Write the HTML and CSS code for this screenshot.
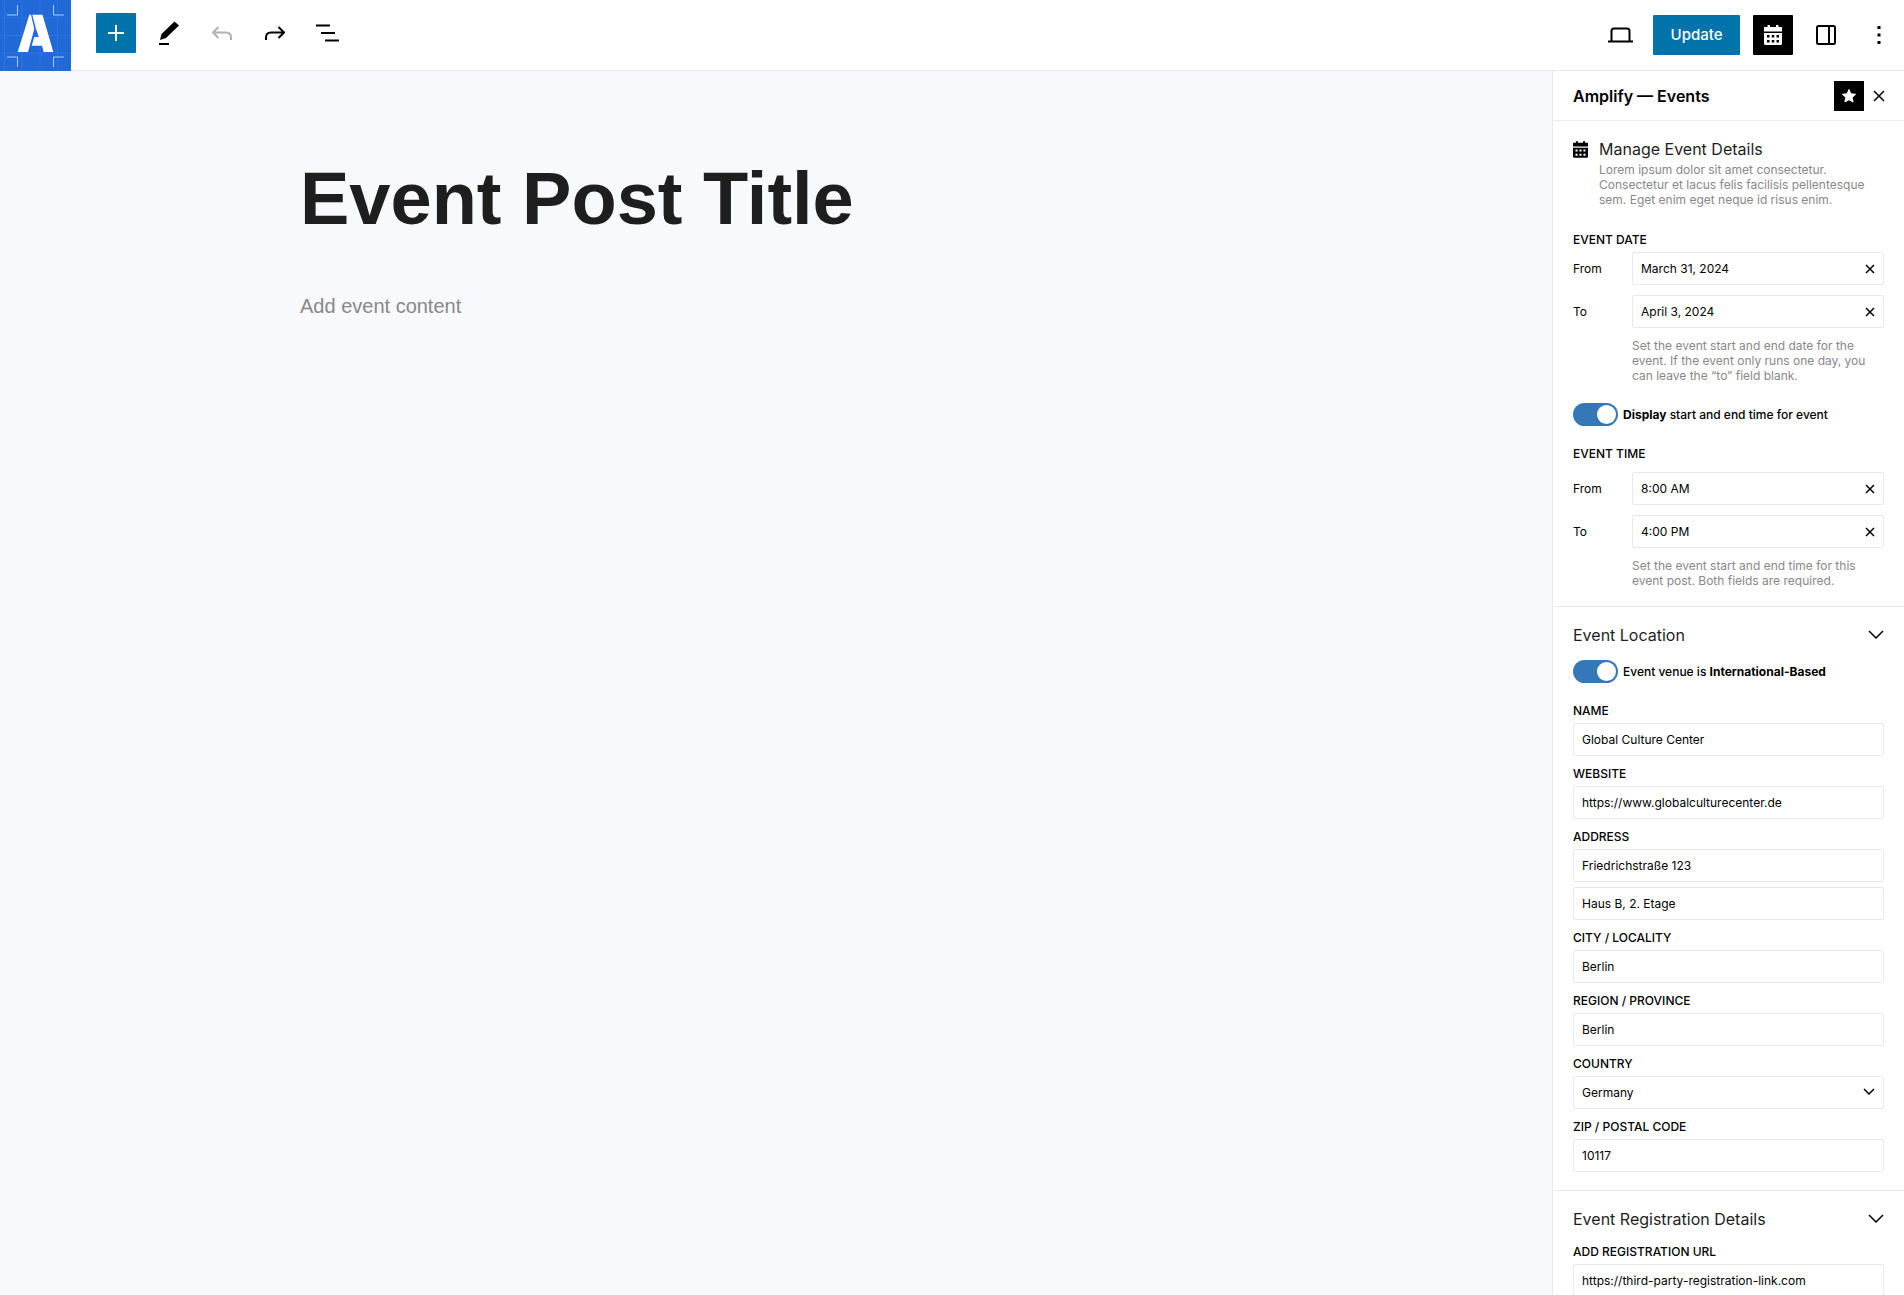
FILE: index.html
```html
<!doctype html>
<html lang="en">
<head>
<meta charset="utf-8">
<meta name="viewport" content="width=device-width, initial-scale=1">
<title>Event Post Title</title>
<link rel="stylesheet" href="styles.css">
</head>
<body>

<header class="topbar">
  <a class="logo" href="#" aria-label="Amplify">
    <svg width="71" height="71" viewBox="0 0 71 71">
      <rect width="71" height="71" fill="#2269d8"/>
      <path d="M4.500 0v71M22 0v71M40 0v71M57.500 0v71M0 18h71M0 35.500h71M0 53h71" stroke="#2d75e0" fill="none"/>
      <path d="M17.500 5v10H7M53.500 5v10H64M17.500 67V57H7M53.500 67V57H64" stroke="#a9ccf8" fill="none"/>
      <path d="M29.300 14.700h1.700L34.300 29l-6.300 23H17.700z" fill="#fff"/>
      <path d="M32.300 14.700h10.200L53.300 52H43.700L42 45.700H31.700L34.200 37h4.600L36 29z" fill="#fff"/>
    </svg>
  </a>
  <div class="tools">
    <button class="icon-btn blue" aria-label="Add block">
      <svg width="16" height="16" viewBox="0 0 16 16"><path d="M8 0v16M0 8h16" stroke="#fff" stroke-width="2"/></svg>
    </button>
    <button class="icon-btn" aria-label="Edit">
      <svg width="22" height="24" viewBox="0 0 22 24"><path d="M2 19l1.500-6L16.500 .500 21 4.500 8 17z"/><path d="M1 23h10" stroke="#000" stroke-width="2"/></svg>
    </button>
    <button class="icon-btn" aria-label="Undo" disabled>
      <svg class="line" width="20" height="14" viewBox="0 0 20 14"><path d="M6.500 1L1 6.500 6.500 12M1 6.500h13q5 0 5 5V14"/></svg>
    </button>
    <button class="icon-btn" aria-label="Redo">
      <svg class="line" width="20" height="14" viewBox="0 0 20 14"><path d="M13.500 1L19 6.500 13.500 12M19 6.500H6q-5 0-5 5V14"/></svg>
    </button>
    <button class="icon-btn" aria-label="Document overview">
      <svg class="line" width="24" height="18" viewBox="0 0 24 18"><path d="M0 1.500h14M5 9h14M9 16.500h14"/></svg>
    </button>
  </div>
  <div class="actions">
    <button class="icon-btn" aria-label="Preview">
      <svg class="line" width="25" height="16" viewBox="0 0 25 16"><path d="M3.500 14V4q0-2.500 2.500-2.500h13Q21.500 1.500 21.500 4v10M0 14.500h25"/></svg>
    </button>
    <button class="update">Update</button>
    <button class="icon-btn black" aria-label="Events">
      <svg width="18" height="20" viewBox="0 0 18 20"><use href="#calendar"/></svg>
    </button>
    <button class="icon-btn" aria-label="Settings">
      <svg class="line" width="20" height="20" viewBox="0 0 20 20"><rect x="1" y="1" width="18" height="18" rx="1.500"/><path d="M13 1v18"/></svg>
    </button>
    <button class="icon-btn" aria-label="Options">
      <svg width="4" height="18" viewBox="0 0 4 18"><path d="M.500 0h3v3h-3zM.500 7.500h3v3h-3zM.500 15h3v3h-3z"/></svg>
    </button>
  </div>
</header>

<div class="workspace">
  <main class="editor">
    <h1>Event Post Title</h1>
    <p>Add event content</p>
  </main>

  <aside class="sidebar">
    <div class="sidebar-head">
      <h2>Amplify — Events</h2>
      <button class="pin" aria-label="Pin sidebar">
        <svg width="14" height="14" viewBox="0 0 14 14"><path d="M7 .500l1.900 4.300 4.700.500-3.500 3.100 1 4.600L7 10.700 2.900 13l1-4.600L.400 5.300l4.700-.500z" fill="#fff" stroke="#fff" stroke-linejoin="round"/></svg>
      </button>
      <button class="close" aria-label="Close sidebar">
        <svg width="12" height="12" viewBox="0 0 12 12"><path d="M1 1l10 10M11 1L1 11"/></svg>
      </button>
    </div>

    <section>
      <div class="intro">
        <svg width="15" height="17" viewBox="0 0 18 20">
          <g id="calendar">
            <path d="M3.500 0h2.500v2h6V0h2.500v2H18v4.500H0V2h3.500z"/>
            <path fill-rule="evenodd" d="M0 8h18v10.500q0 1.500-1.500 1.500h-15Q0 20 0 18.500zM3 10v2.500h2.500V10zM7.750 10v2.500h2.500V10zM12.500 10v2.500H15V10zM3 15v2.500h2.500V15zM7.750 15v2.500h2.500V15zM12.500 15v2.500H15V15z"/>
          </g>
        </svg>
        <div>
          <h3>Manage Event Details</h3>
          <p class="help">Lorem ipsum dolor sit amet consectetur. Consectetur et lacus felis facilisis pellentesque sem. Eget enim eget neque id risus enim.</p>
        </div>
      </div>

      <h4>Event Date</h4>
      <div class="range">
        <label for="date-from">From</label>
        <div class="clearable">
          <input id="date-from" type="text" value="March 31, 2024">
          <button aria-label="Clear start date"><svg width="10" height="10" viewBox="0 0 10 10"><path d="M1 1l8 8M9 1L1 9"/></svg></button>
        </div>
        <label for="date-to">To</label>
        <div class="clearable">
          <input id="date-to" type="text" value="April 3, 2024">
          <button aria-label="Clear end date"><svg width="10" height="10" viewBox="0 0 10 10"><path d="M1 1l8 8M9 1L1 9"/></svg></button>
        </div>
        <p class="help">Set the event start and end date for the event. If the event only runs one day, you can leave the “to” field blank.</p>
      </div>

      <label class="toggle"><input type="checkbox" checked><span><b>Display</b> start and end time for event</span></label>

      <h4>Event Time</h4>
      <div class="range time">
        <label for="time-from">From</label>
        <div class="clearable">
          <input id="time-from" type="text" value="8:00 AM">
          <button aria-label="Clear start time"><svg width="10" height="10" viewBox="0 0 10 10"><path d="M1 1l8 8M9 1L1 9"/></svg></button>
        </div>
        <label for="time-to">To</label>
        <div class="clearable">
          <input id="time-to" type="text" value="4:00 PM">
          <button aria-label="Clear end time"><svg width="10" height="10" viewBox="0 0 10 10"><path d="M1 1l8 8M9 1L1 9"/></svg></button>
        </div>
        <p class="help">Set the event start and end time for this event post. Both fields are required.</p>
      </div>
    </section>

    <section>
      <button class="section-title">Event Location
        <svg width="16" height="10" viewBox="0 0 16 10"><path d="M1 1l7 7 7-7"/></svg>
      </button>
      <label class="toggle"><input type="checkbox" checked><span>Event venue is <b>International-Based</b></span></label>
      <div class="fields">
        <div class="field">
          <label for="name">Name</label>
          <input id="name" type="text" value="Global Culture Center">
        </div>
        <div class="field">
          <label for="website">Website</label>
          <input id="website" type="text" value="https://www.globalculturecenter.de">
        </div>
        <div class="field">
          <label for="address">Address</label>
          <input id="address" type="text" value="Friedrichstraße 123">
          <input type="text" value="Haus B, 2. Etage" aria-label="Address line 2">
        </div>
        <div class="field">
          <label for="city">City / Locality</label>
          <input id="city" type="text" value="Berlin">
        </div>
        <div class="field">
          <label for="region">Region / Province</label>
          <input id="region" type="text" value="Berlin">
        </div>
        <div class="field">
          <label for="country">Country</label>
          <div class="select">
            <select id="country"><option>Germany</option></select>
            <svg width="12" height="8" viewBox="0 0 12 8"><path d="M1 1l5 5 5-5"/></svg>
          </div>
        </div>
        <div class="field">
          <label for="zip">Zip / Postal Code</label>
          <input id="zip" type="text" value="10117">
        </div>
      </div>
    </section>

    <section>
      <button class="section-title">Event Registration Details
        <svg width="16" height="10" viewBox="0 0 16 10"><path d="M1 1l7 7 7-7"/></svg>
      </button>
      <div class="field">
        <label for="reg-url">Add Registration URL</label>
        <input id="reg-url" type="text" value="https://third-party-registration-link.com">
      </div>
    </section>
  </aside>
</div>

</body>
</html>
```
FILE: styles.css
```css
* {
  box-sizing: border-box;
}
body {
  margin: 0;
  height: 100vh;
  display: flex;
  flex-direction: column;
  overflow: hidden;
  background: #fff;
  color: #000;
  font: 13px/16px Inter, sans-serif;
}
h1, h2, h3, h4, p {
  margin: 0;
}
button, input, select {
  font: inherit;
  color: inherit;
}
button {
  padding: 0;
  border: none;
  background: none;
  cursor: pointer;
}
svg {
  display: block;
  flex: none;
}

/* top bar */
.topbar {
  display: flex;
  flex: none;
  height: 71px;
  border-bottom: 1px solid #e9e9ed;
}
.logo {
  width: 71px;
  height: 71px;
}
.tools, .actions {
  display: flex;
  gap: 13px;
}
.tools {
  padding: 13px 0 0 25px;
}
.actions {
  margin-left: auto;
  padding: 15px 5px 0 0;
}
.icon-btn {
  display: flex;
  align-items: center;
  justify-content: center;
  width: 40px;
  height: 40px;
  border-radius: 1px;
}
.icon-btn:disabled {
  opacity: .3;
}
.line {
  fill: none;
  stroke: #000;
  stroke-width: 2;
}
.blue, .update {
  background: #0073aa;
}
.black {
  background: #000;
  fill: #fff;
}
.update {
  width: 87px;
  height: 40px;
  border-radius: 1px;
  color: #fff;
  font-size: 15px;
  font-weight: 500;
}

.workspace {
  display: flex;
  flex: 1;
  min-height: 0;
}

/* editor */
.editor {
  flex: 1;
  padding: 83px 300px;
  background: #f8f9fd;
  font-family: "Liberation Sans", sans-serif;
}
.editor h1 {
  color: #1e1e1e;
  font-size: 74px;
  line-height: 90px;
}
.editor p {
  margin-top: 50px;
  color: #888;
  font-size: 20px;
  line-height: 24px;
}

/* sidebar */
.sidebar {
  width: 352px;
  border-left: 1px solid #e9e9ed;
  overflow-y: auto;
  scrollbar-width: none;
}
.sidebar-head {
  display: flex;
  align-items: center;
  height: 50px;
  padding: 0 19px 0 20px;
  border-bottom: 1px solid #ececec;
}
.sidebar-head h2 {
  flex: 1;
  font-size: 16px;
  font-weight: 600;
}
.pin {
  display: flex;
  align-items: center;
  justify-content: center;
  width: 30px;
  height: 30px;
  margin-right: 9px;
  background: #000;
}
.close svg, .clearable svg, .section-title svg, .select svg {
  fill: none;
  stroke: #000;
  stroke-width: 1.5;
}
section {
  padding: 18px 20px;
}
section + section {
  border-top: 1px solid #e9e9e9;
}
.intro {
  display: flex;
  gap: 11px;
  margin-bottom: 25px;
}
.intro > svg {
  margin-top: 2px;
}
.intro h3 {
  margin-bottom: 3px;
}
.intro h3, .section-title {
  color: #1e1e1e;
  font-size: 16px;
  font-weight: 400;
  line-height: 20px;
}
.help {
  color: #888;
  font-size: 12px;
  line-height: 15px;
}
h4, .field label {
  display: block;
  margin-bottom: 4px;
  font-size: 12px;
  font-weight: 500;
  line-height: 16px;
  text-transform: uppercase;
}
.range {
  display: grid;
  grid-template-columns: 59px 1fr;
  gap: 10px 0;
  align-items: center;
}
.time {
  margin-top: 10px;
}
.range label, .toggle, input, select {
  font-size: 12px;
}
.range .help {
  grid-column: 2;
}
.clearable, .field input, select {
  width: 100%;
  height: 33px;
  border: 1px solid #e9e9e9;
  border-radius: 2px;
  background: #fff;
}
.clearable {
  display: flex;
  padding-right: 8px;
}
.clearable input {
  flex: 1;
  min-width: 0;
  padding: 0 8px;
  border: none;
  background: none;
}
.field input, select {
  display: block;
  padding: 0 8px;
}
.field input + input {
  margin-top: 5px;
}
.fields {
  display: grid;
  gap: 10px;
}
.toggle {
  display: flex;
  align-items: center;
  gap: 5px;
  margin: 20px 0;
  font-weight: 500;
}
.toggle b {
  font-weight: 700;
}
.toggle input {
  appearance: none;
  display: flex;
  justify-content: flex-end;
  width: 45px;
  height: 23px;
  margin: 0;
  padding: 2px;
  border-radius: 12px;
  background: #3578b8;
}
.toggle input::before {
  content: "";
  width: 19px;
  height: 19px;
  border-radius: 50%;
  background: #fff;
}
.section-title {
  display: flex;
  align-items: center;
  justify-content: space-between;
  width: 100%;
  margin-bottom: 15px;
}
.section-title + .toggle {
  margin-top: 0;
}
.select {
  position: relative;
}
select {
  appearance: none;
}
.select svg {
  position: absolute;
  top: 12px;
  right: 9px;
  pointer-events: none;
}
```
